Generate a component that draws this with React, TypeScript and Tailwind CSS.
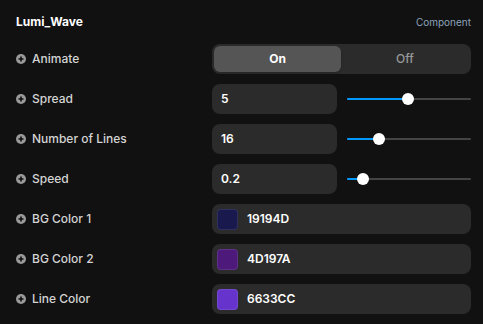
import React from "react";

const PlusIcon = () => (
  <svg width="10" height="10" viewBox="0 0 10 10" className="shrink-0">
    <circle cx="5" cy="5" r="5" fill="#9a9a9a" />
    <path d="M5 2.5v5M2.5 5h5" stroke="#111111" strokeWidth="1.6" />
  </svg>
);

const Label = ({ text }: { text: string }) => (
  <div className="flex items-center gap-[6px] w-[196px] shrink-0">
    <PlusIcon />
    <span className="text-[12px] font-medium text-[#d4d4d4]">{text}</span>
  </div>
);

const NumberRow = ({ label, value, pct }: { label: string; value: string; pct: number }) => (
  <div className="flex items-center h-[30px]">
    <Label text={label} />
    <div className="flex items-center gap-[10px] w-[259px]">
      <div className="w-[125px] h-[30px] rounded-[8px] bg-[#2b2b2b] flex items-center pl-[9px] text-[12px] font-semibold text-white">
        {value}
      </div>
      <div className="relative flex-1 h-[12px] flex items-center">
        <div className="w-full h-[2px] bg-[#444444] rounded-full" />
        <div className="absolute left-0 h-[2px] bg-[#0099ff] rounded-full" style={{ width: `${pct}%` }} />
        <div
          className="absolute w-[12px] h-[12px] rounded-full bg-white -translate-x-1/2"
          style={{ left: `${pct}%` }}
        />
      </div>
    </div>
  </div>
);

const ColorRow = ({ label, hex }: { label: string; hex: string }) => (
  <div className="flex items-center h-[30px]">
    <Label text={label} />
    <div className="w-[259px] h-[30px] rounded-[8px] bg-[#2b2b2b] flex items-center pl-[5px] gap-[9px]">
      <div
        className="w-[21px] h-[21px] rounded-[4px] border border-white/10"
        style={{ backgroundColor: `#${hex}` }}
      />
      <span className="text-[12px] font-semibold text-white">{hex}</span>
    </div>
  </div>
);

export default function App() {
  return (
    <div
      className="w-[483px] h-[324px] bg-[#111111] pt-[10px] pl-4 pr-3 flex flex-col gap-[10px]"
      style={{ fontFamily: "Inter, 'Noto Sans', sans-serif" }}
    >
      <div className="flex items-center justify-between h-[24px] mb-[0px]">
        <span className="text-[12px] font-bold text-white">Lumi_Wave</span>
        <span className="text-[10px] text-[#8ea3bb]">Component</span>
      </div>

      <div className="flex items-center h-[30px]">
        <Label text="Animate" />
        <div className="w-[259px] h-[30px] rounded-[8px] bg-[#2b2b2b] p-[2px] flex">
          <div className="w-[127px] h-full rounded-[6px] bg-[#555555] flex items-center justify-center text-[12px] font-bold text-white shadow-sm">
            On
          </div>
          <div className="flex-1 flex items-center justify-center text-[12px] font-medium text-[#999999]">
            Off
          </div>
        </div>
      </div>

      <NumberRow label="Spread" value="5" pct={49} />
      <NumberRow label="Number of Lines" value="16" pct={26} />
      <NumberRow label="Speed" value="0.2" pct={13} />

      <ColorRow label="BG Color 1" hex="19194D" />
      <ColorRow label="BG Color 2" hex="4D197A" />
      <ColorRow label="Line Color" hex="6633CC" />
    </div>
  );
}
